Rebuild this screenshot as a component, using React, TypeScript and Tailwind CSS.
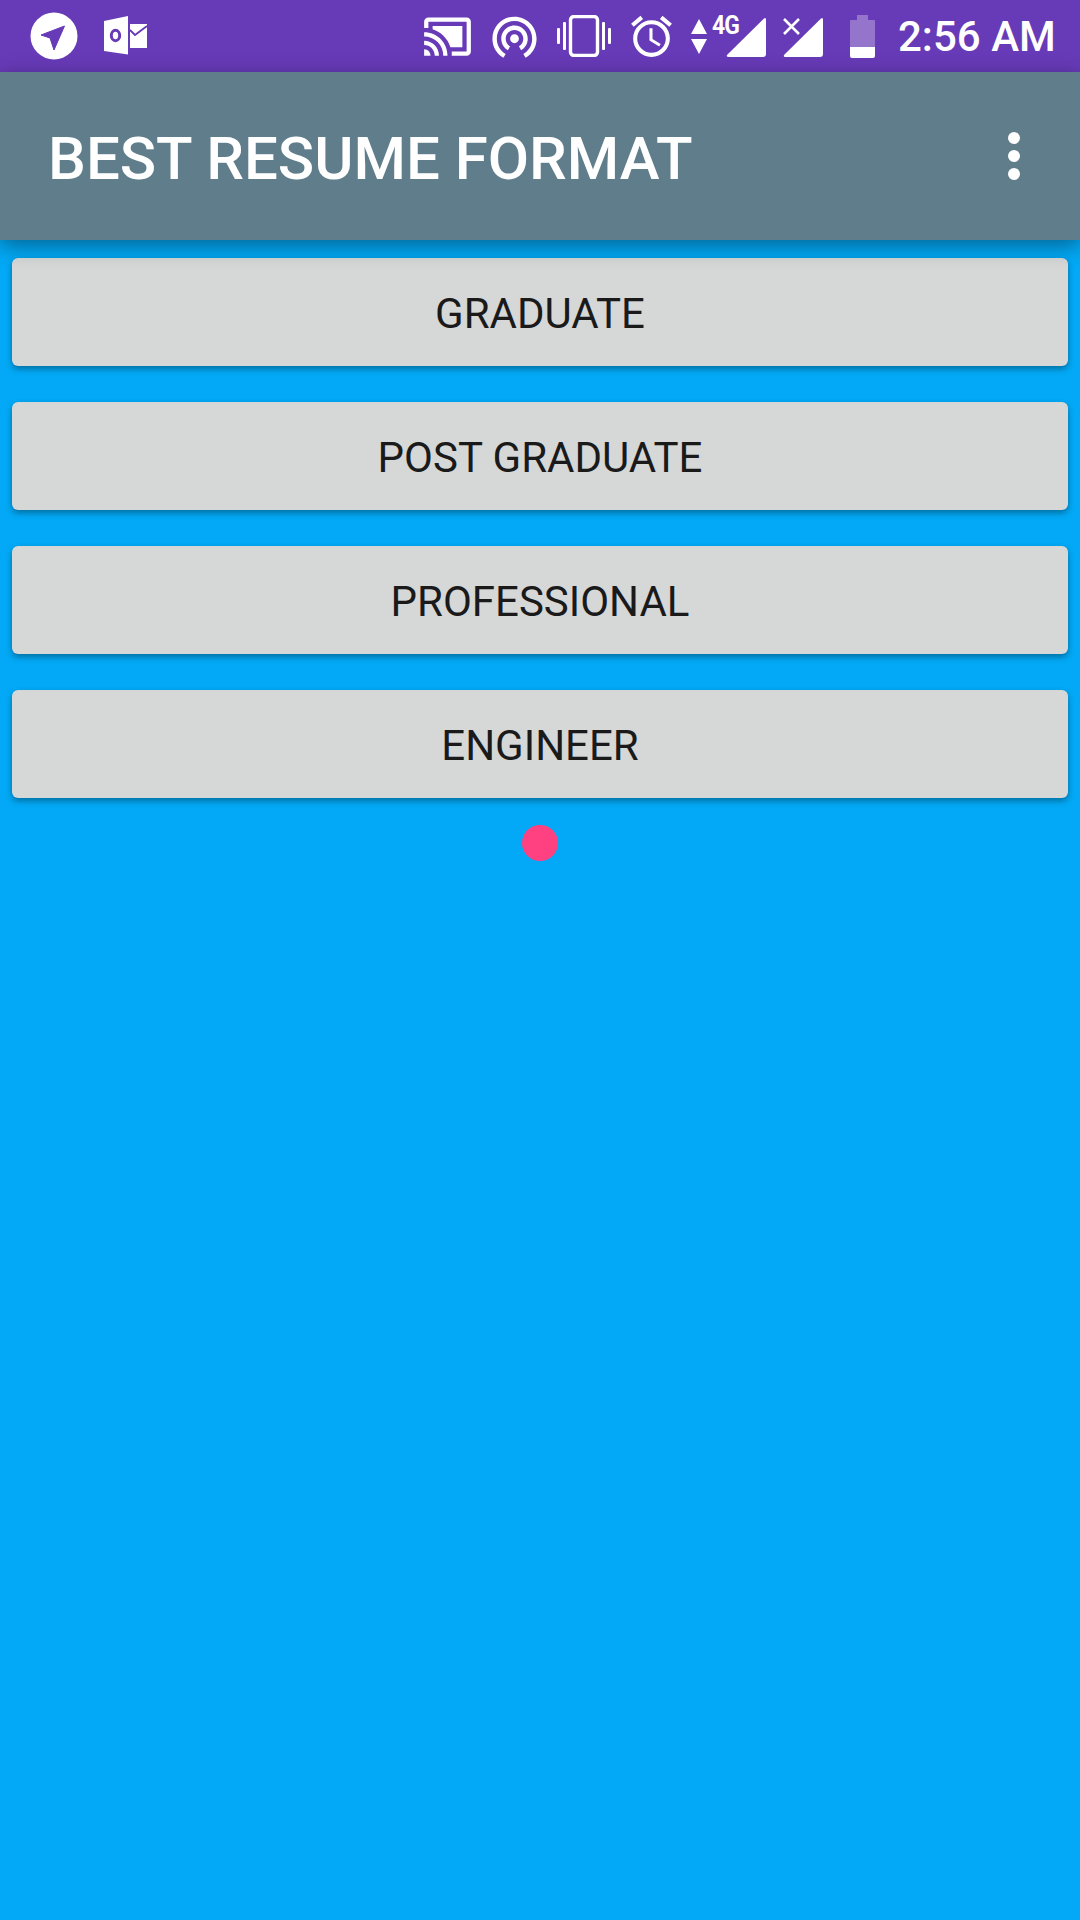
import { MdCastConnected, MdWifiTethering, MdAccessAlarm } from "react-icons/md";

const labels = ["GRADUATE", "POST GRADUATE", "PROFESSIONAL", "ENGINEER"];

function SendBadge() {
  return (
    <svg width="48" height="48" viewBox="0 0 48 48" className="ml-[30px] shrink-0">
      <circle cx="24" cy="24" r="23.5" fill="#fff" />
      <path d="M11 23 L34.5 14 L24 38 L20 26 Z" fill="#673ab7" stroke="#673ab7" strokeWidth="1" strokeLinejoin="round" />
    </svg>
  );
}

function Outlook() {
  return (
    <svg width="44" height="40" viewBox="0 0 44 40" className="ml-[26px] shrink-0">
      <path d="M0 5 L24 0 V38.5 L0 35 Z" fill="#fff" />
      <ellipse cx="11.5" cy="19.5" rx="4.2" ry="5.2" fill="none" stroke="#673ab7" strokeWidth="3" />
      <path d="M26 8 H43 V32 H26 Z" fill="#fff" />
      <path d="M26 14 L31 19 L43 10" fill="none" stroke="#673ab7" strokeWidth="1.8" />
    </svg>
  );
}

function Vibration() {
  return (
    <svg width="54" height="42" viewBox="0 0 54 42" className="ml-[16px] shrink-0" fill="#fff">
      <rect x="0" y="13" width="3" height="16" rx="1" />
      <rect x="6" y="7" width="3" height="28" rx="1" />
      <rect x="45" y="7" width="3" height="28" rx="1" />
      <rect x="51" y="13" width="3" height="16" rx="1" />
      <rect x="13.5" y="1.5" width="27" height="39" rx="3.5" fill="none" stroke="#fff" strokeWidth="3.4" />
    </svg>
  );
}

function Signal({ x }: { x?: boolean }) {
  return (
    <svg width="40" height="40" viewBox="0 0 40 40" className="shrink-0 overflow-visible">
      <path d="M1 38 L38 1.5 Q40 0 40 3 V37 Q40 40 37 40 H3 Q0 40 1 38 Z" fill="#fff" />
      {x && <path d="M1 2 L16 17 M16 2 L1 17" stroke="#fff" strokeWidth="2.6" />}
    </svg>
  );
}

function Battery() {
  return (
    <svg width="25" height="43" viewBox="0 0 25 43" className="ml-[27px] shrink-0">
      <path d="M7 0 H18 V5 H24 Q25 5 25 6 V32 H0 V6 Q0 5 1 5 H7 Z" fill="#fff" fillOpacity="0.3" />
      <path d="M0 32 H25 V41 Q25 43 23 43 H2 Q0 43 0 41 Z" fill="#fff" />
    </svg>
  );
}

function Arrows() {
  return (
    <svg width="16" height="35" viewBox="0 0 16 35" className="ml-[15px] shrink-0">
      <path d="M8 0 L16 15 H0 Z M0 20 H16 L8 35 Z" fill="#fff" />
    </svg>
  );
}

export default function App() {
  return (
    <div className="w-[1080px] h-[1920px] bg-[#03a9f6] flex flex-col overflow-hidden font-['Roboto',sans-serif]">
      <div className="h-[72px] bg-[#673ab7] flex items-center text-white shrink-0">
        <SendBadge />
        <Outlook />
        <MdCastConnected size={51} className="ml-[274px] shrink-0" />
        <MdWifiTethering size={53} className="ml-[15px] shrink-0" />
        <Vibration />
        <MdAccessAlarm size={49} className="ml-[16px] shrink-0" />
        <Arrows />
        <div className="relative ml-[19px] w-[40px] h-[40px] mt-[2px] shrink-0">
          <span className="absolute left-[-14px] top-[-4px] origin-left scale-x-[0.88] text-[26px] leading-[24px] font-bold tracking-[-1px]">4G</span>
          <Signal />
        </div>
        <div className="ml-[17px] mt-[2px] shrink-0"><Signal x /></div>
        <Battery />
        <span className="ml-[23px] mt-[2px] text-[42px] leading-[72px] font-medium whitespace-nowrap">2:56 AM</span>
      </div>
      <div className="relative z-10 h-[168px] bg-[#607d8b] shrink-0 flex items-center justify-between pl-[48px] pr-[30px] shadow-[0_6px_20px_rgba(0,0,0,0.4)]">
        <h1 className="text-white text-[60px] font-medium leading-none whitespace-nowrap pt-[5px]">BEST RESUME FORMAT</h1>
        <svg width="72" height="72" viewBox="0 0 72 72" className="shrink-0" fill="#fff">
          <circle cx="36" cy="18" r="6" />
          <circle cx="36" cy="36" r="6" />
          <circle cx="36" cy="54" r="6" />
        </svg>
      </div>
      <div className="flex flex-col items-center pt-[18px] px-3">
        <div className="flex flex-col gap-9 w-full">
          {labels.map((l) => (
            <button key={l} className="h-[108px] w-full pt-[4px] rounded-[6px] bg-[#d6d7d7] text-[#1a1a1a] text-[42px] leading-none shadow-[0_3px_6px_rgba(0,0,0,0.35)]">
              {l}
            </button>
          ))}
        </div>
        <div className="w-9 h-9 rounded-full bg-[#ff4081] mt-[27px]" />
      </div>
    </div>
  );
}
